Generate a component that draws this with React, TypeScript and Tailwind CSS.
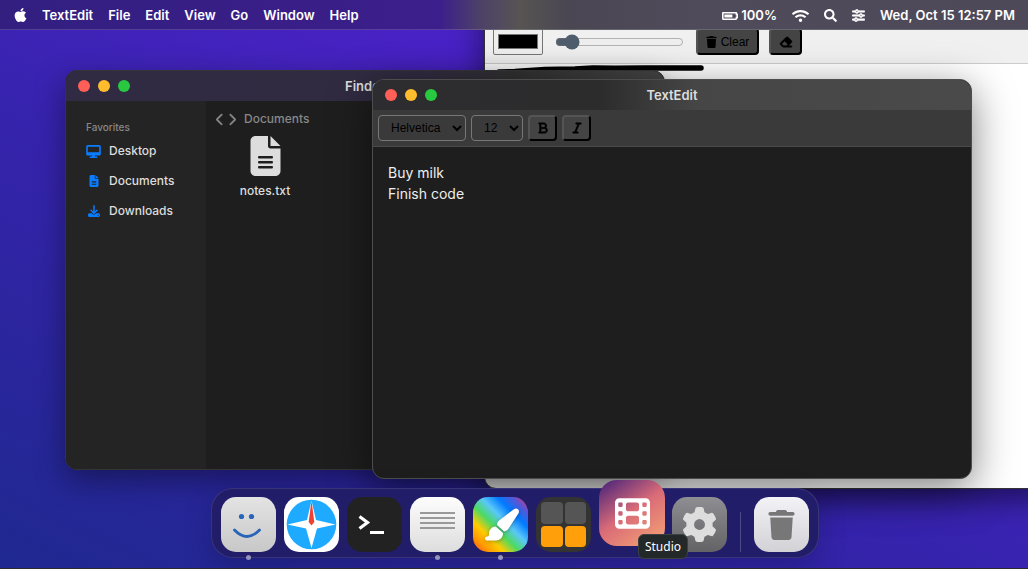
import type { ReactNode } from "react";
import { FaBatteryThreeQuarters, FaSearch, FaWifi } from "react-icons/fa";
import {
  FaApple,
  FaBold,
  FaChevronLeft,
  FaChevronRight,
  FaDesktop,
  FaDownload,
  FaEraser,
  FaFileLines,
  FaFilm,
  FaGear,
  FaItalic,
  FaPaintbrush,
  FaSliders,
  FaTrash,
} from "react-icons/fa6";

const menus = ["TextEdit", "File", "Edit", "View", "Go", "Window", "Help"];

function MenuBar() {
  return (
    <header className="relative z-40 flex h-[30px] items-center justify-between border-b border-white/15 bg-[linear-gradient(90deg,#321f80_0px,#3a1e88_340px,#3c1f8c_440px,#4d4168_480px,#575453_520px,#4a4652_570px,#504b5b_700px,#4e4959_100%)] pt-[2px] pr-[13px] pl-[14px] text-[13px] font-semibold text-white">
      <nav className="flex items-center gap-[15px]" aria-label="Menu bar">
        <button type="button" aria-label="Apple menu">
          <FaApple className="h-4 w-[13px] -translate-y-px" />
        </button>
        {menus.map((m) => (
          <button type="button" key={m}>
            {m}
          </button>
        ))}
      </nav>
      <div className="flex items-center gap-[15px]">
        <span className="flex items-center gap-[3px]">
          <FaBatteryThreeQuarters className="h-[14px] w-4" />
          100%
        </span>
        <FaWifi className="h-[14px] w-[17px]" />
        <button type="button" aria-label="Search">
          <FaSearch className="size-[13px]" />
        </button>
        <button type="button" aria-label="Control center">
          <FaSliders className="size-[13px] [stroke-width:20px]" />
        </button>
        <time>Wed, Oct 15 12:57 PM</time>
      </div>
    </header>
  );
}

function TitleBar({ title, className }: { title: string; className: string }) {
  return (
    <div className={`relative flex h-[30px] shrink-0 items-center px-3 ${className}`}>
      <div className="flex gap-2">
        <button type="button" aria-label="Close" className="size-3 rounded-full bg-[#ff5f57]" />
        <button type="button" aria-label="Minimize" className="size-3 rounded-full bg-[#ffbd2e]" />
        <button type="button" aria-label="Zoom" className="size-3 rounded-full bg-[#28c940]" />
      </div>
      <h2 className="pointer-events-none absolute inset-x-0 pt-px text-center text-[13px] font-semibold text-[#dddddd]">
        {title}
      </h2>
    </div>
  );
}

const toolButton =
  "flex items-center justify-center gap-1 rounded-[4px] border-2 border-black bg-[#444444] text-black [border-style:outset]";

function PaintWindow() {
  return (
    <section
      aria-label="Paint"
      className="absolute -top-[46px] left-[484px] flex h-[505px] w-[600px] flex-col overflow-hidden rounded-xl border border-[#333333] bg-white shadow-[0_10px_30px_rgba(0,0,0,0.5)]"
    >
      <div className="flex h-[79px] shrink-0 items-end border-b border-[#cccccc] bg-[#f0f0f0] px-2 pb-2 font-['Liberation_Sans',sans-serif] text-[12px]">
        <input
          type="color"
          aria-label="Brush color"
          defaultValue="#000000"
          className="h-[27px] w-[50px] rounded-[2px] border border-[#767676] bg-[#efefef] px-[2px] py-px"
        />
        <input
          type="range"
          aria-label="Brush size"
          min={1}
          max={50}
          defaultValue={5}
          className="mb-[5px] ml-3 w-[129px] accent-[#4f5d6c]"
        />
        <button type="button" className={`${toolButton} ml-3 h-[27px] w-[63px]`}>
          <FaTrash className="h-3 w-[11px]" />
          Clear
        </button>
        <button type="button" aria-label="Eraser" className={`${toolButton} ml-[10px] h-[27px] w-[33px]`}>
          <FaEraser className="h-3 w-[14px] [stroke-width:20px]" />
        </button>
      </div>
      <svg className="h-12 w-full" viewBox="0 0 598 48" preserveAspectRatio="xMinYMin slice" aria-hidden="true">
        <path
          d="M14 8 L30 7.5 L60 5.5 L90 5 L108 4 L130 4.2 L160 4 L190 4 L216 4"
          fill="none"
          stroke="#000"
          strokeWidth="5.5"
          strokeLinecap="round"
          strokeLinejoin="round"
        />
      </svg>
    </section>
  );
}

const places = [
  { name: "Desktop", icon: <FaDesktop className="h-[13px] w-[15px]" /> },
  { name: "Documents", icon: <FaFileLines className="h-3 w-[10px]" /> },
  { name: "Downloads", icon: <FaDownload className="size-3" /> },
];

function FinderWindow() {
  return (
    <section
      aria-label="Finder"
      className="absolute top-10 left-[65px] flex h-[400px] w-[600px] flex-col overflow-hidden rounded-xl border border-[#353437] bg-[#1e1e1e] shadow-[0_10px_30px_rgba(0,0,0,0.4)]"
    >
      <TitleBar title="Finder" className="bg-[linear-gradient(90deg,#302b43_0%,#302b40_60%,#303030_75%,#454545_100%)]" />
      <div className="flex min-h-0 flex-1">
        <aside className="w-[140px] bg-[#242424] px-5 pt-[18px]">
          <h3 className="mb-px text-[10px] leading-4 font-medium text-[#888888]">Favorites</h3>
          <ul className="text-[12px] font-medium text-[#dddddd]">
            {places.map((p) => (
              <li key={p.name} className="flex h-[30px] items-center gap-2">
                <span className="flex w-[15px] justify-center text-[#0a7cff]">{p.icon}</span>
                {p.name}
              </li>
            ))}
          </ul>
        </aside>
        <div className="flex-1 px-[10px] pt-2">
          <div className="flex h-5 items-center text-[12px] font-medium text-[#888888]">
            <button type="button" aria-label="Back">
              <FaChevronLeft className="h-[13px] w-2 [stroke-width:16px]" />
            </button>
            <button type="button" aria-label="Forward" className="ml-1">
              <FaChevronRight className="h-[13px] w-2 [stroke-width:16px]" />
            </button>
            <span className="ml-2">Documents</span>
          </div>
          <button type="button" className="mt-[7px] flex w-[98px] flex-col items-center text-[12px] font-medium text-[#dddddd]">
            <FaFileLines className="h-10 w-[31px]" />
            <span className="mt-[5px] leading-5">notes.txt</span>
          </button>
        </div>
      </div>
    </section>
  );
}

function TextEditWindow() {
  const select = "h-[26px] rounded-[4px] border border-[#777777] bg-transparent pl-2 text-black";
  return (
    <section
      aria-label="TextEdit"
      className="absolute top-[49px] left-[372px] flex h-[400px] w-[600px] flex-col overflow-hidden rounded-xl border border-[#4d4d4d] bg-[#1e1e1e] shadow-[0_10px_40px_rgba(0,0,0,0.5)]"
    >
      <TitleBar title="TextEdit" className="bg-[linear-gradient(90deg,#2d2c30_0%,#2c2c2c_38%,#464646_54%,#4a4a4a_100%)]" />
      <div className="flex h-[37px] shrink-0 items-center gap-[5px] border-b border-[#4a4a4a] bg-[#3a3a3a] px-[5px] font-['Liberation_Sans',sans-serif] text-[12px]">
        <select aria-label="Font" className={`${select} w-[88px]`}>
          <option>Helvetica</option>
        </select>
        <select aria-label="Font size" className={`${select} w-[52px]`}>
          <option>12</option>
        </select>
        <button type="button" aria-label="Bold" className={`${toolButton} h-[26px] w-[29px]`}>
          <FaBold className="h-3 w-[10px] [stroke-width:20px]" />
        </button>
        <button type="button" aria-label="Italic" className={`${toolButton} h-[26px] w-[29px]`}>
          <FaItalic className="h-3 w-[10px] [stroke-width:20px]" />
        </button>
      </div>
      <textarea
        aria-label="Document"
        spellCheck={false}
        defaultValue={"Buy milk\nFinish code"}
        className="flex-1 resize-none bg-transparent p-[15px] text-[14px] leading-[21px] text-[#eeeeee] outline-none"
      />
    </section>
  );
}

function DockIcon({ name, running, className, children }: { name: string; running?: boolean; className: string; children: ReactNode }) {
  return (
    <div className="relative">
      <button type="button" aria-label={name} className={`flex items-center justify-center overflow-hidden ${className}`}>
        {children}
      </button>
      {running && <span className="absolute -bottom-2 left-[25px] size-[5px] rounded-full bg-white/50" />}
    </div>
  );
}

const tile = "size-[55px] rounded-[15px]";

function Dock() {
  return (
    <div className="absolute inset-x-0 bottom-[10px] z-30 flex justify-center pl-[2px]">
      <div className="flex h-[70px] items-end gap-2 rounded-[22px] border border-white/10 bg-[#221d68] px-[9px] pb-[5px] shadow-[0_10px_30px_rgba(0,0,0,0.2)]">
        <DockIcon name="Finder" running className={`${tile} bg-linear-to-b from-[#e3e3e3] to-[#c8c8c8]`}>
          <svg viewBox="0 0 55 55" className="size-full">
            <circle cx="20.5" cy="19.5" r="2.6" fill="#2864b8" />
            <circle cx="30.5" cy="19.5" r="2.6" fill="#2864b8" />
            <path d="M13.5 33 Q26 46 38.5 33" fill="none" stroke="#2864b8" strokeWidth="2.8" strokeLinecap="round" />
          </svg>
        </DockIcon>
        <DockIcon name="Safari" className={`${tile} bg-white`}>
          <svg viewBox="0 0 55 55" className="size-full">
            <circle cx="27.5" cy="27.5" r="24.8" fill="#1eaaff" />
            <path d="M27.5 3.5 L32 23 L51.5 27.5 L33 31.5 L27.5 51 L22 31.5 L3.5 27.5 L23 23 Z" fill="#fff" />
            <path d="M27.5 3.5 L30.3 25 L27.5 28.5 L24.7 25 Z" fill="#ef4035" />
          </svg>
        </DockIcon>
        <DockIcon name="Terminal" className={`${tile} bg-[#222222]`}>
          <svg viewBox="0 0 55 55" className="size-full" fill="none" stroke="#fff">
            <path d="M12.5 19.5 L20.5 25.5 L12.5 31.5" strokeWidth="3.2" />
            <path d="M23 35.5 H37" strokeWidth="3" />
          </svg>
        </DockIcon>
        <DockIcon name="TextEdit" running className={`${tile} bg-linear-to-b from-[#fdfdfd] to-[#dddddd]`}>
          <svg viewBox="0 0 55 55" className="size-full" stroke="#999" strokeWidth="2">
            <path d="M10 16 H45 M10 21 H45 M10 26 H45 M10 31 H45" />
          </svg>
        </DockIcon>
        <DockIcon
          name="Paint"
          running
          className={`${tile} bg-[linear-gradient(45deg,#ff3b30_0%,#ff9500_14%,#ffcc00_28%,#4cd964_43%,#5ac8fa_57%,#007aff_72%,#5856d6_86%,#ff2d55_100%)]`}
        >
          <FaPaintbrush className="h-[33px] w-[36px] text-white drop-shadow-[0_1px_2px_rgba(0,0,0,0.3)]" />
        </DockIcon>
        <DockIcon name="Calculator" className={`${tile} bg-[#333333]`}>
          <span className="grid size-[45px] grid-cols-2 gap-[2px]">
            <span className="rounded-[4px] bg-[#555555]" />
            <span className="rounded-[4px] bg-[#555555]" />
            <span className="rounded-[4px] bg-[#ff9f0a]" />
            <span className="rounded-[4px] bg-[#ff9f0a]" />
          </span>
        </DockIcon>
        <div className="relative mb-[6px]">
          <DockIcon name="Studio" className="size-[66px] rounded-[18px] bg-[linear-gradient(145deg,#42207a_0%,#d96b78_48%,#f7a773_100%)]">
            <FaFilm className="size-[35px] text-white" />
          </DockIcon>
          <span role="tooltip" className="absolute top-[54px] left-[39px] z-10 flex h-[25px] w-[50px] items-center justify-center rounded-[6px] border border-[#3b4241] bg-[#232829] font-['Noto_Sans',sans-serif] text-[12px] text-white">
            Studio
          </span>
        </div>
        <DockIcon name="Settings" className={`${tile} -ml-px bg-linear-to-b from-[#8e8e93] to-[#636366]`}>
          <FaGear className="size-[35px] text-[#dddddd]" />
        </DockIcon>
        <div className="mx-[5px] h-10 w-px bg-white/20" />
        <DockIcon name="Trash" className={`${tile} bg-linear-to-b from-[#f2f2f7] to-[#d1d1d6]`}>
          <FaTrash className="h-[30px] w-[27px] text-[#777777]" />
        </DockIcon>
      </div>
    </div>
  );
}

export default function App() {
  return (
    <div className="relative flex h-screen flex-col overflow-hidden border-b border-[#2b2b2b] bg-[linear-gradient(25deg,#1f2890_0%,#2c259f_25%,#3723af_46%,#3f23b8_55%,#4822c4_68%,#4822c4_100%)] font-['Inter',sans-serif]">
      <MenuBar />
      <main className="relative flex-1">
        <PaintWindow />
        <FinderWindow />
        <TextEditWindow />
      </main>
      <Dock />
    </div>
  );
}
